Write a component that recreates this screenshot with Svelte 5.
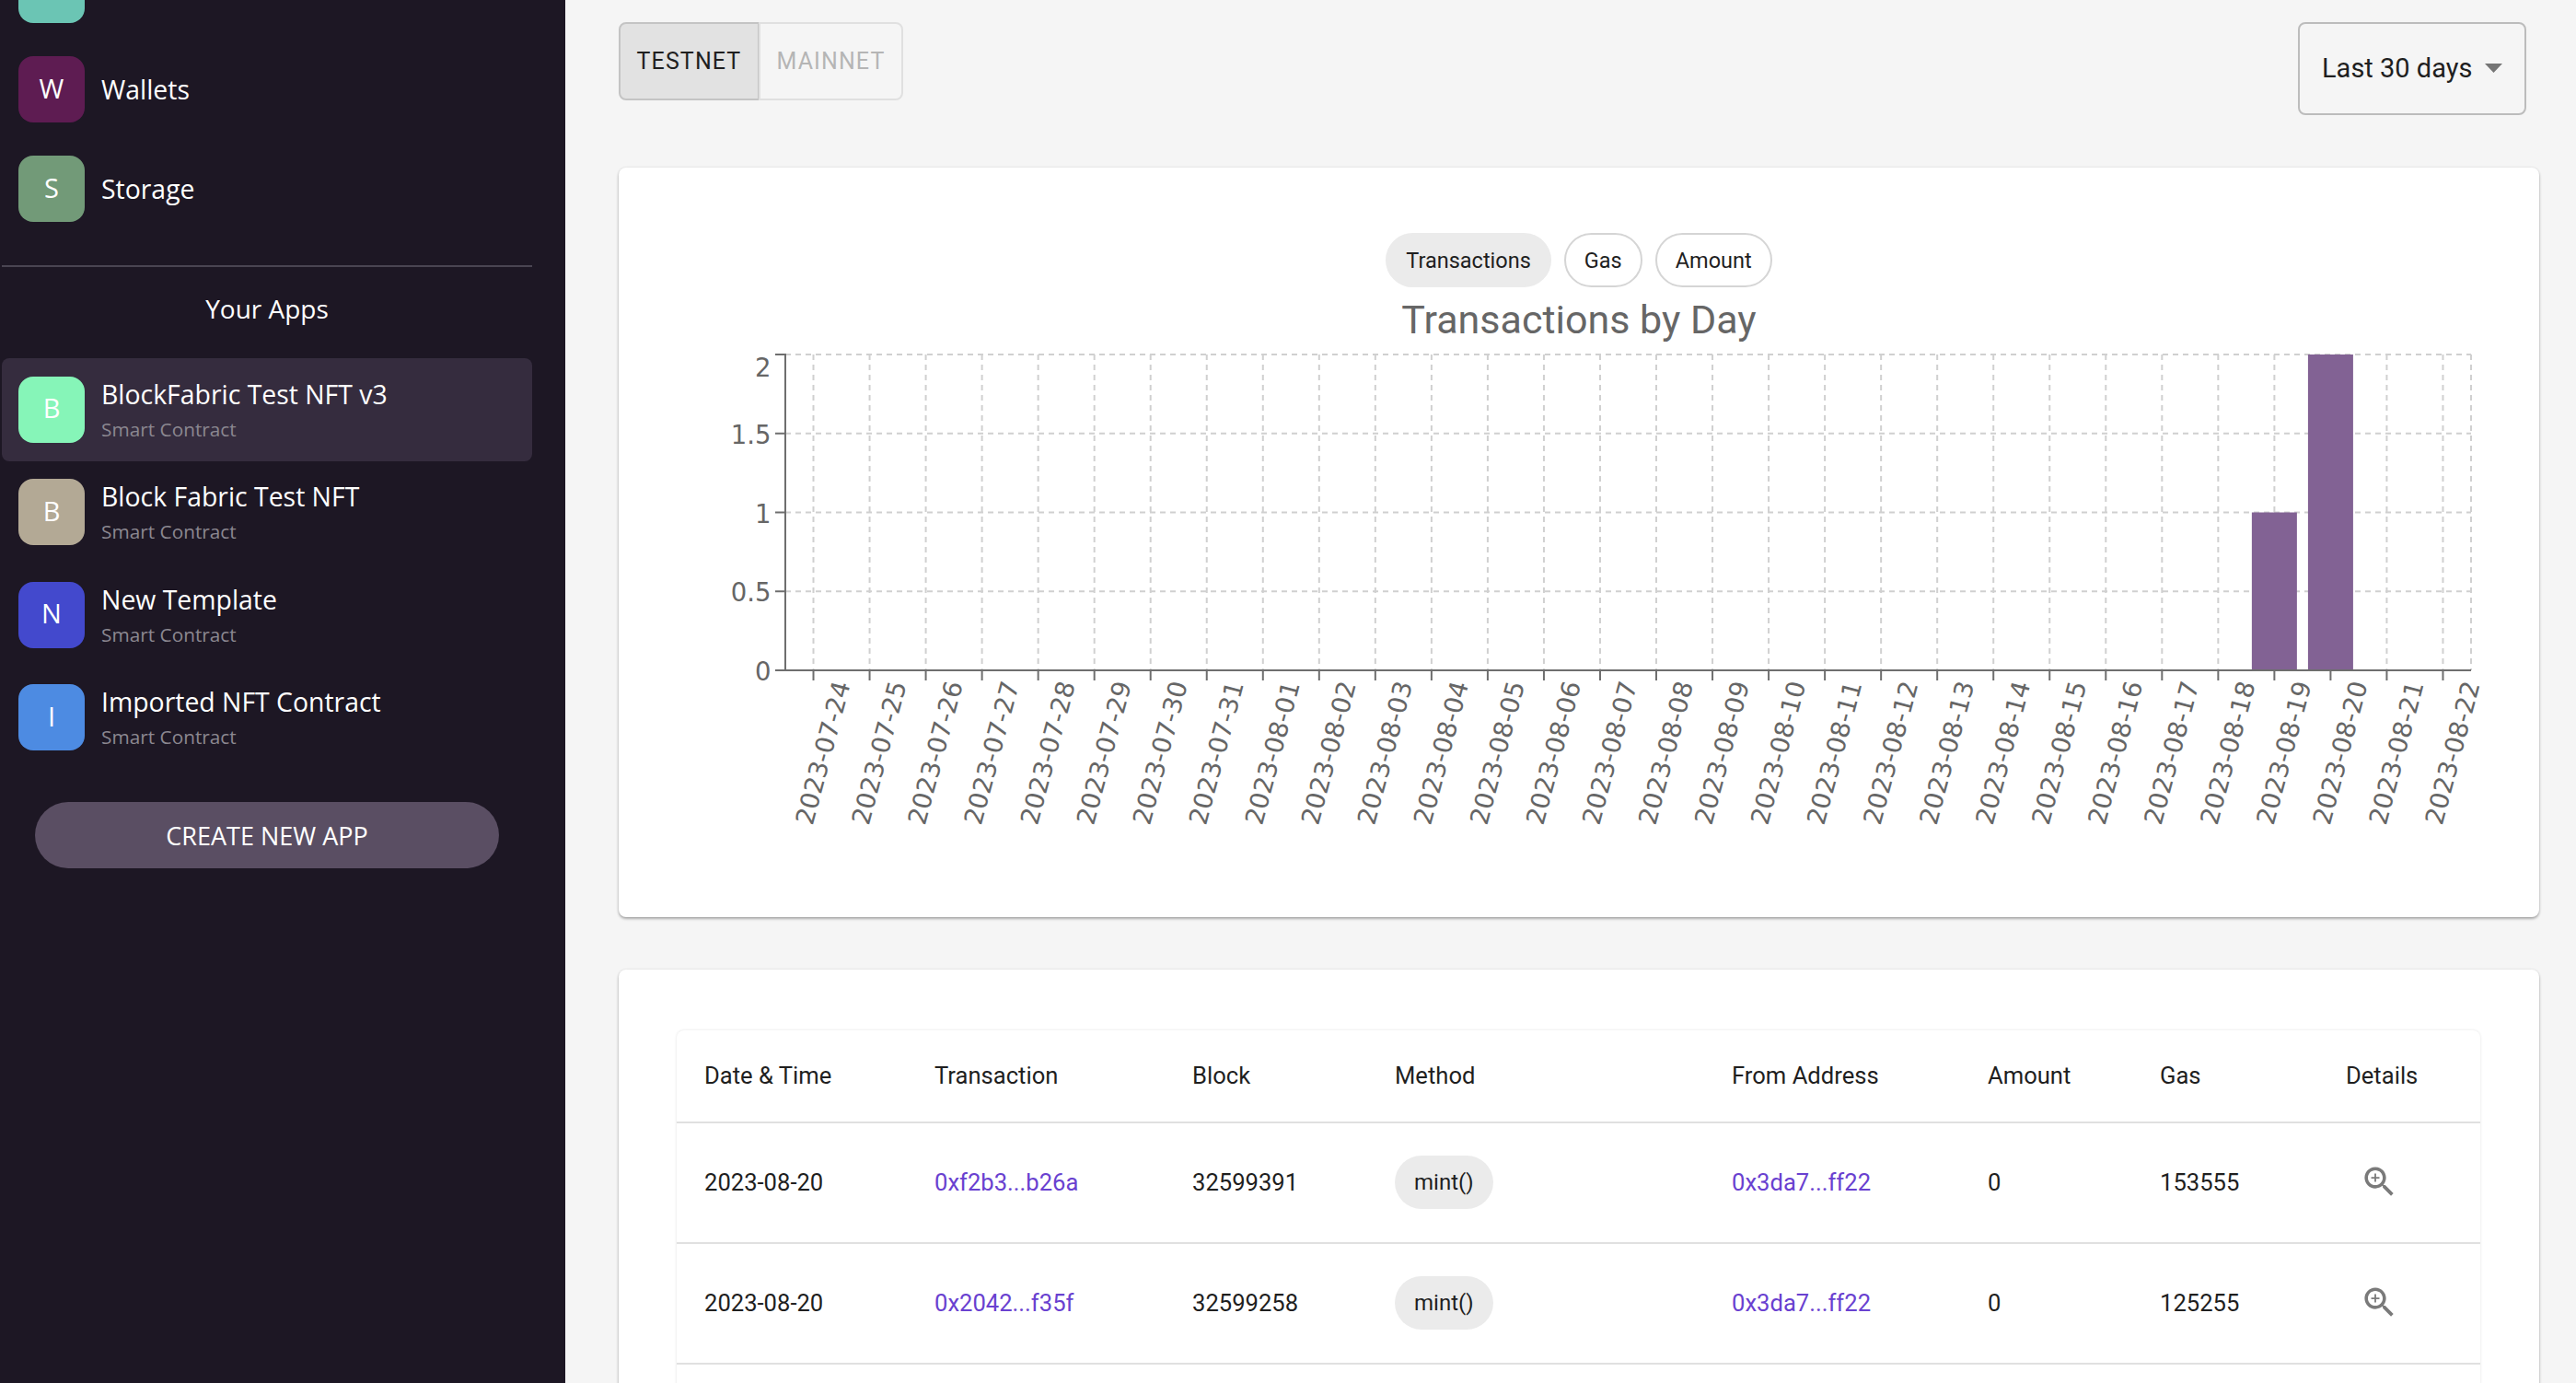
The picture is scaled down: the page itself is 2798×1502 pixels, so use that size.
<script>
  const navItems = [
    { letter: "", name: "", color: "#6bc5b4" },
    { letter: "W", name: "Wallets", color: "#5e1c52" },
    { letter: "S", name: "Storage", color: "#729a78" },
  ]

  const apps = [
    { letter: "B", name: "BlockFabric Test NFT v3", color: "#86f5b8", active: true },
    { letter: "B", name: "Block Fabric Test NFT", color: "#b3a995" },
    { letter: "N", name: "New Template", color: "#4349cd" },
    { letter: "I", name: "Imported NFT Contract", color: "#4d8be2" },
  ]

  const rows = [
    { date: "2023-08-20", tx: "0xf2b3...b26a", block: "32599391", from: "0x3da7...ff22", amount: "0", gas: "153555" },
    { date: "2023-08-20", tx: "0x2042...f35f", block: "32599258", from: "0x3da7...ff22", amount: "0", gas: "125255" },
  ]

  // Chart geometry, in page pixels (the svg viewBox starts at the card's left edge)
  const axisLeft = 853
  const axisRight = 2684
  const axisTop = 385
  const axisBottom = 728
  const band = (axisRight - axisLeft) / 30

  function buildDays() {
    const days = []
    for (let d = 24; d <= 31; d++) days.push(`2023-07-${d}`)
    for (let d = 1; d <= 22; d++) days.push(`2023-08-${String(d).padStart(2, "0")}`)
    return days
  }

  const days = buildDays()
  const values = { "2023-08-19": 1, "2023-08-20": 2 }
  const yTicks = [
    { label: "2", value: 2, labelDy: 14 },
    { label: "1.5", value: 1.5, labelDy: 1 },
    { label: "1", value: 1, labelDy: 1 },
    { label: "0.5", value: 0.5, labelDy: 1 },
    { label: "0", value: 0, labelDy: 1 },
  ]

  const yFor = (v) => axisBottom - (v / 2) * (axisBottom - axisTop)
  const xFor = (i) => axisLeft + band * (i + 0.5)
</script>

<div class="layout">
  <aside class="sidebar">
    <ul class="nav">
      {#each navItems as item}
        <li class="nav-item">
          <span class="avatar" style="background: {item.color}">{item.letter}</span>
          <span class="title">{item.name}</span>
        </li>
      {/each}
    </ul>
    <hr class="divider" />
    <div class="apps-heading">Your Apps</div>
    <ul class="apps">
      {#each apps as app}
        <li class="app" class:active={app.active}>
          <span class="avatar" style="background: {app.color}">{app.letter}</span>
          <div class="app-text">
            <span class="title">{app.name}</span>
            <span class="sub">Smart Contract</span>
          </div>
        </li>
      {/each}
    </ul>
    <button class="create">CREATE NEW APP</button>
  </aside>

  <main class="main">
    <div class="top">
      <div class="toggle">
        <button class="toggle-btn selected">TESTNET</button>
        <button class="toggle-btn">MAINNET</button>
      </div>
      <div class="select">
        <span>Last 30 days</span>
        <svg class="arrow" width="19" height="10" viewBox="0 0 19 10"><polygon points="0,0 19,0 9.5,10" /></svg>
      </div>
    </div>

    <section class="card chart-card">
      <div class="pills">
        <button class="pill on">Transactions</button>
        <button class="pill">Gas</button>
        <button class="pill">Amount</button>
      </div>
      <h2 class="chart-title">Transactions by Day</h2>
      <svg class="chart" width="2086" height="623" viewBox="672 373 2086 623">
        {#each yTicks as t}
          <line class="grid" x1={axisLeft} x2={axisRight} y1={yFor(t.value)} y2={yFor(t.value)} />
        {/each}
        {#each days as day, i}
          <line class="grid" x1={xFor(i)} x2={xFor(i)} y1={axisTop} y2={axisBottom} />
        {/each}
        <line class="grid" x1={axisRight} x2={axisRight} y1={axisTop} y2={axisBottom} />

        {#each days as day, i}
          {#if values[day]}
            <rect class="bar" x={xFor(i) - 24.5} y={yFor(values[day])} width="49" height={axisBottom - yFor(values[day])} />
          {/if}
        {/each}

        <line class="axis" x1={axisLeft} x2={axisLeft} y1={axisTop - 1} y2={axisBottom + 1} />
        <line class="axis" x1={axisLeft} x2={axisRight} y1={axisBottom} y2={axisBottom} />

        {#each yTicks as t}
          <line class="axis" x1={axisLeft - 11} x2={axisLeft} y1={yFor(t.value)} y2={yFor(t.value)} />
          <text class="tick y" x="837.5" y={yFor(t.value) + t.labelDy}>{t.label}</text>
        {/each}

        {#each days as day, i}
          <line class="axis" x1={xFor(i)} x2={xFor(i)} y1={axisBottom} y2={axisBottom + 11} />
          <text class="tick x" x={xFor(i) + 10} y="817.5" transform="rotate(-75 {xFor(i) + 10} 817.5)">{day}</text>
        {/each}
      </svg>
    </section>

    <section class="card table-card">
      <div class="table-wrap">
        <table>
          <thead>
            <tr>
              <th class="c-date">Date &amp; Time</th>
              <th class="c-tx">Transaction</th>
              <th class="c-block">Block</th>
              <th class="c-method">Method</th>
              <th class="c-from">From Address</th>
              <th class="c-amount">Amount</th>
              <th class="c-gas">Gas</th>
              <th>Details</th>
            </tr>
          </thead>
          <tbody>
            {#each rows as row}
              <tr>
                <td>{row.date}</td>
                <td><span class="link">{row.tx}</span></td>
                <td>{row.block}</td>
                <td><span class="chip">mint()</span></td>
                <td><span class="link">{row.from}</span></td>
                <td>{row.amount}</td>
                <td>{row.gas}</td>
                <td>
                  <svg class="zoom" width="43" height="43" viewBox="0 0 24 24">
                    <path d="M15.5 14h-.79l-.28-.27C15.41 12.59 16 11.11 16 9.5 16 5.91 13.09 3 9.5 3S3 5.91 3 9.5 5.91 16 9.5 16c1.61 0 3.09-.59 4.23-1.57l.27.28v.79l5 4.99L20.49 19l-4.99-5zm-6 0C7.01 14 5 11.99 5 9.5S7.01 5 9.5 5 14 7.01 14 9.5 11.99 14 9.5 14z" />
                    <path d="M12 10h-2v2H9v-2H7V9h2V7h1v2h2v1z" />
                  </svg>
                </td>
              </tr>
            {/each}
          </tbody>
        </table>
      </div>
    </section>
  </main>
</div>

<style>
  :global(body) {
    margin: 0;
    background: #f5f5f5;
  }
  ul {
    list-style: none;
    margin: 0;
    padding: 0;
  }
  button {
    font: inherit;
    cursor: pointer;
  }

  .layout {
    display: flex;
    height: 1502px;
    overflow: hidden;
    font-family: Roboto, sans-serif;
  }

  /* sidebar */
  .sidebar {
    flex: 0 0 614px;
    box-sizing: border-box;
    padding: 0 36px 0 2px;
    background: #1d1724;
    color: #fff;
    font-family: "Open Sans", sans-serif;
    font-size: 28.4px;
  }
  .nav {
    margin-top: -65px;
  }
  .nav-item {
    display: flex;
    align-items: center;
    gap: 18px;
    height: 108px;
    padding-left: 18px;
  }
  .avatar {
    flex: 0 0 72px;
    height: 72px;
    border-radius: 16px;
    display: flex;
    align-items: center;
    justify-content: center;
    padding-bottom: 4px;
    box-sizing: border-box;
    font-size: 29px;
  }
  .divider {
    margin: 29px 0 0;
    border: 0;
    height: 2px;
    background: #4a4552;
  }
  .apps-heading {
    height: 99px;
    padding-bottom: 9px;
    box-sizing: border-box;
    display: flex;
    align-items: center;
    justify-content: center;
    font-size: 28px;
  }
  .app {
    display: flex;
    align-items: center;
    gap: 18px;
    height: 111.5px;
    padding-left: 18px;
    border-radius: 8px;
  }
  .app.active {
    background: #352c3e;
  }
  .app-text {
    display: flex;
    flex-direction: column;
    gap: 4px;
    line-height: 38px;
  }
  .sub {
    font-size: 20.8px;
    line-height: 30px;
    color: #8b8790;
  }
  .create {
    display: block;
    width: 504px;
    height: 72px;
    margin: 36px 0 0 36px;
    border: 0;
    border-radius: 36px;
    background: #5a4e63;
    color: #fff;
    font-size: 27px;
  }

  /* main column */
  .main {
    flex: 1;
    min-width: 0;
    padding: 24px 40px 0 58px;
  }
  .top {
    display: flex;
    justify-content: space-between;
    align-items: flex-start;
    height: 101px;
    padding-right: 14px;
  }
  .toggle {
    display: flex;
    height: 85px;
  }
  .toggle-btn {
    box-sizing: border-box;
    width: 157px;
    border: 2px solid #e0e0e0;
    background: transparent;
    color: #b5b5b5;
    font-family: Roboto, sans-serif;
    font-size: 25px;
    font-weight: 400;
    letter-spacing: 1.1px;
    padding: 0;
    border-radius: 0 8px 8px 0;
  }
  .toggle-btn.selected {
    width: 152px;
    border-color: #c4c4c4;
    border-right-width: 1px;
    background: #e2e2e2;
    color: #1f1f1f;
    border-radius: 8px 0 0 8px;
  }
  .select {
    box-sizing: border-box;
    width: 248px;
    height: 101px;
    padding: 0 24px 2px 24px;
    border: 2px solid #bcbcbc;
    border-radius: 8px;
    display: flex;
    align-items: center;
    justify-content: space-between;
    font-size: 29px;
    color: #1f1f1f;
  }
  .arrow polygon {
    fill: #757575;
  }

  .card {
    margin-top: 57px;
    background: #fff;
    border-radius: 8px;
    box-shadow: 0 2px 3px rgba(0, 0, 0, 0.3), 0 0 3px rgba(0, 0, 0, 0.1);
  }
  .chart-card {
    height: 814px;
    padding-top: 71px;
    box-sizing: border-box;
  }
  .pills {
    display: flex;
    justify-content: center;
    gap: 14px;
  }
  .pill {
    height: 59px;
    padding: 0 20px;
    border: 2px solid #d5d5d5;
    border-radius: 30px;
    background: #fff;
    color: #1f1f1f;
    font-family: Roboto, sans-serif;
    font-size: 23.5px;
  }
  .pill.on {
    border-color: #ebebeb;
    background: #ebebeb;
  }
  .chart-title {
    margin: 10px 0 0;
    height: 51px;
    line-height: 50px;
    text-align: center;
    font-size: 43px;
    font-weight: 400;
    color: #666;
  }
  .chart {
    display: block;
  }
  .grid {
    stroke: #d0d0d0;
    stroke-width: 2;
    stroke-dasharray: 6 5;
  }
  .axis {
    stroke: #6e6e6e;
    stroke-width: 2;
  }
  .bar {
    fill: #826294;
  }
  .tick {
    fill: #666;
    font-family: "DejaVu Sans", sans-serif;
    dominant-baseline: central;
  }
  .tick.y {
    font-size: 27.5px;
    text-anchor: end;
  }
  .tick.x {
    font-size: 27.5px;
    text-anchor: middle;
  }

  .table-card {
    padding: 66px 64px 0 63px;
  }
  .table-wrap {
    padding-bottom: 100px;
    border-radius: 8px;
    box-shadow: 0 0 3px rgba(0, 0, 0, 0.12);
  }
  table {
    width: 100%;
    table-layout: fixed;
    border-collapse: collapse;
    font-size: 25.6px;
    color: #1f1f1f;
  }
  th,
  td {
    padding: 0 0 2px 30px;
    text-align: left;
    font-weight: 400;
    border-bottom: 2px solid #e0e0e0;
  }
  th {
    height: 97px;
  }
  td {
    height: 127px;
  }
  .c-date {
    width: 220px;
  }
  .c-tx {
    width: 250px;
  }
  .c-block {
    width: 190px;
  }
  .c-method {
    width: 336px;
  }
  .c-from {
    width: 248px;
  }
  .c-amount {
    width: 157px;
  }
  .c-gas {
    width: 172px;
  }
  .link {
    color: #6941d0;
  }
  .chip {
    display: inline-block;
    height: 58px;
    line-height: 58px;
    padding: 0 21px;
    border-radius: 29px;
    background: #ebebeb;
    font-size: 24px;
  }
  .zoom {
    display: block;
    margin-left: 15px;
    fill: #7a7a7a;
  }
</style>
